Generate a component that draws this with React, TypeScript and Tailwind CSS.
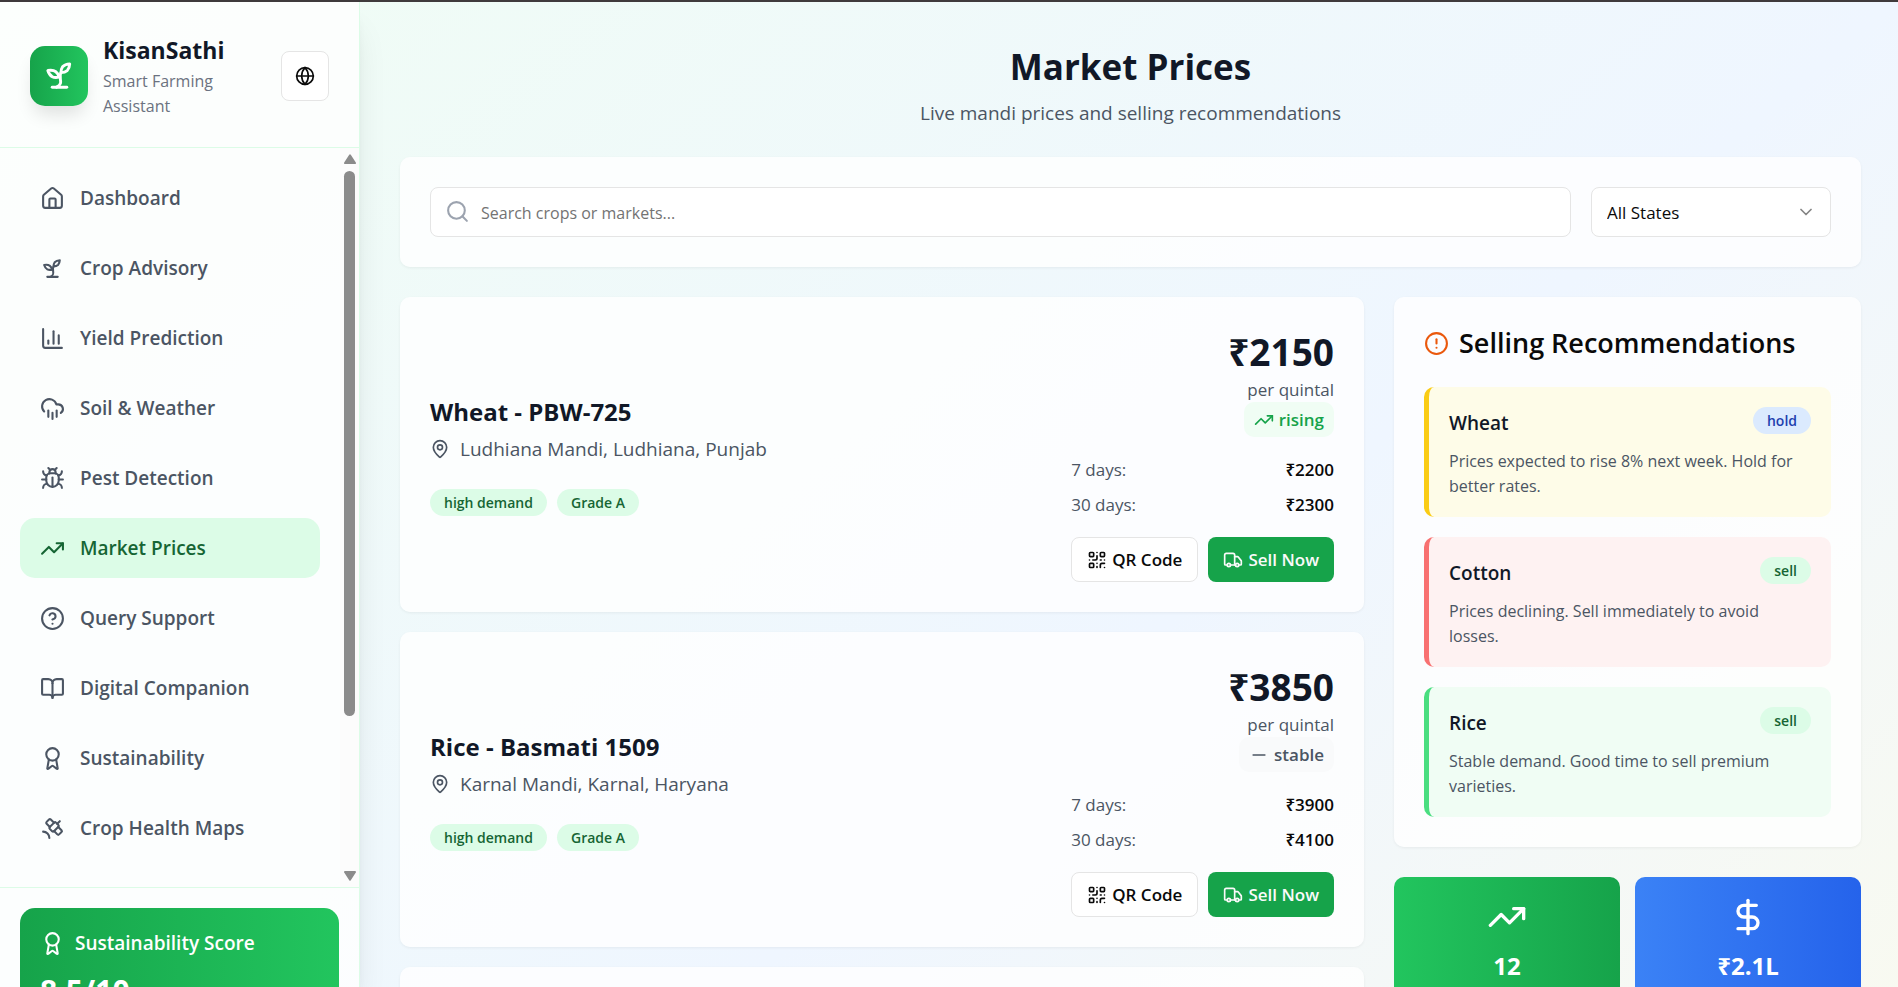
import type { ReactNode } from "react";
import {
  Award,
  BookOpen,
  Bug,
  ChartColumn,
  ChevronDown,
  CircleAlert,
  CircleQuestionMark,
  CloudRain,
  DollarSign,
  Globe,
  House,
  MapPin,
  Minus,
  QrCode,
  Satellite,
  Search,
  TrendingUp,
  Truck,
} from "lucide-react";

function Sprout({ className }: { className?: string }) {
  return (
    <svg
      viewBox="0 0 24 24"
      fill="none"
      stroke="currentColor"
      strokeWidth="2"
      strokeLinecap="round"
      strokeLinejoin="round"
      className={className}
      aria-hidden="true"
    >
      <path d="M7 20h10" />
      <path d="M10 20c5.5-2.5.8-6.4 3-10" />
      <path d="M9.5 9.4c1.1.8 1.8 2.2 2.3 3.7-2 .4-3.5.4-4.8-.3-1.2-.6-2.3-1.9-3-4.2 2.8-.5 4.4 0 5.5.8z" />
      <path d="M14.1 6a7 7 0 0 0-1.1 4c1.9-.1 3.3-.6 4.3-1.4 1-1 1.6-2.3 1.7-4.6-2.7.1-4 1-4.9 2z" />
    </svg>
  );
}

const navItems = [
  { label: "Dashboard", Icon: House },
  { label: "Crop Advisory", Icon: Sprout },
  { label: "Yield Prediction", Icon: ChartColumn },
  { label: "Soil & Weather", Icon: CloudRain },
  { label: "Pest Detection", Icon: Bug },
  { label: "Market Prices", Icon: TrendingUp, active: true },
  { label: "Query Support", Icon: CircleQuestionMark },
  { label: "Digital Companion", Icon: BookOpen },
  { label: "Sustainability", Icon: Award },
  { label: "Crop Health Maps", Icon: Satellite },
];

const prices = [
  {
    name: "Wheat - PBW-725",
    place: "Ludhiana Mandi, Ludhiana, Punjab",
    price: "₹2150",
    trend: "rising",
    week: "₹2200",
    month: "₹2300",
  },
  {
    name: "Rice - Basmati 1509",
    place: "Karnal Mandi, Karnal, Haryana",
    price: "₹3850",
    trend: "stable",
    week: "₹3900",
    month: "₹4100",
  },
];

const recommendations = [
  {
    crop: "Wheat",
    action: "hold",
    text: "Prices expected to rise 8% next week. Hold for better rates.",
    box: "border-[#facc15] bg-[#fefce8]",
    pill: "bg-[#dbeafe] text-[#1e40af]",
  },
  {
    crop: "Cotton",
    action: "sell",
    text: "Prices declining. Sell immediately to avoid losses.",
    box: "border-[#f87171] bg-[#fef2f2]",
    pill: "bg-[#dcfce7] text-[#166534]",
  },
  {
    crop: "Rice",
    action: "sell",
    text: "Stable demand. Good time to sell premium varieties.",
    box: "border-[#4ade80] bg-[#f0fdf4]",
    pill: "bg-[#dcfce7] text-[#166534]",
  },
];

function Pill({ tone, children }: { tone: string; children: ReactNode }) {
  return (
    <span className={`flex h-[27px] items-center rounded-full px-3.5 text-[14px] font-semibold ${tone}`}>
      {children}
    </span>
  );
}

function Card({ className = "", children }: { className?: string; children?: ReactNode }) {
  return (
    <section className={`rounded-[10px] bg-white/80 p-[30px] shadow-[0_1px_3px_rgba(0,0,0,0.06)] ${className}`}>
      {children}
    </section>
  );
}

function Sidebar() {
  return (
    <aside className="z-10 flex h-full w-[360px] shrink-0 flex-col border-r border-[#dcfce7] bg-white/80 shadow-[0_25px_31px_-6px_rgba(0,0,0,0.1),0_10px_12px_-7px_rgba(0,0,0,0.1)]">
      <div className="flex items-center justify-between border-b border-[#dcfce7] px-[30px] pt-[30px] pb-7">
        <div className="flex items-center gap-[15px]">
          <div className="flex h-[60px] w-[58px] shrink-0 items-center justify-center rounded-[15px] bg-[linear-gradient(to_right,#16a34a,#22c55e)] text-white shadow-[0_12px_18px_-4px_rgba(0,0,0,0.12)]">
            <Sprout className="size-[35px]" />
          </div>
          <div className="w-[140px]">
            <div className="text-[23px] leading-[37px] font-bold text-[#111827]">KisanSathi</div>
            <p className="text-[16px] leading-[25px] text-[#6b7280]">Smart Farming Assistant</p>
          </div>
        </div>
        <button
          type="button"
          aria-label="Change language"
          className="flex h-[50px] w-12 shrink-0 items-center justify-center rounded-lg border border-[#e5e5e5] bg-white text-[#0a0a0a]"
        >
          <Globe className="size-5" />
        </button>
      </div>

      <div className="flex min-h-0 flex-1">
        <nav className="flex min-w-0 flex-1 flex-col gap-2.5 overflow-y-auto p-5 [scrollbar-width:none]">
          {navItems.map(({ label, Icon, active }) => (
            <a
              key={label}
              href="#"
              className={`flex h-[60px] shrink-0 items-center gap-[15px] rounded-[15px] px-5 text-[19px] font-semibold ${
                active ? "bg-[#dcfce7] text-[#166534]" : "text-[#4b5563]"
              }`}
            >
              <Icon className="size-[25px] shrink-0" />
              {label}
            </a>
          ))}
        </nav>
        <div aria-hidden="true" className="flex w-[19px] shrink-0 flex-col items-center bg-[#fcfcfc] py-1.5">
          <svg viewBox="0 0 12 10" className="h-2.5 w-3 shrink-0 fill-[#8b8b8b]">
            <path d="M5.2.8a1 1 0 0 1 1.6 0l5 7.6a1 1 0 0 1-.8 1.6H1a1 1 0 0 1-.8-1.6z" />
          </svg>
          <div className="mt-[7px] h-[75%] w-[11px] rounded-full bg-[#8b8b8b]" />
          <svg viewBox="0 0 12 10" className="mt-auto h-2.5 w-3 shrink-0 fill-[#8b8b8b]">
            <path d="M5.2 9.2a1 1 0 0 0 1.6 0l5-7.6A1 1 0 0 0 11 0H1a1 1 0 0 0-.8 1.6z" />
          </svg>
        </div>
      </div>

      <div className="h-[100px] shrink-0 overflow-hidden border-t border-[#dcfce7] p-5">
        <div className="rounded-[15px] bg-[linear-gradient(to_right,#16a34a,#22c55e)] p-5 text-white">
          <div className="mb-2.5 flex items-center gap-2.5 text-[19px] leading-[30px] font-semibold">
            <Award className="size-[25px]" />
            Sustainability Score
          </div>
          <div className="text-[30px] leading-[45px] font-bold">8.5/10</div>
        </div>
      </div>
    </aside>
  );
}

function PriceCard({ item }: { item: (typeof prices)[number] }) {
  const rising = item.trend === "rising";
  return (
    <Card className="flex items-center justify-between">
      <div>
        <h3 className="text-[24px] leading-[38px] font-bold text-[#111827]">{item.name}</h3>
        <p className="mt-0.5 flex items-center gap-2.5 text-[19px] leading-[32px] text-[#4b5563]">
          <MapPin className="size-5" />
          {item.place}
        </p>
        <div className="mt-6 flex gap-2.5">
          <Pill tone="bg-[#dcfce7] text-[#166534]">high demand</Pill>
          <Pill tone="bg-[#dcfce7] text-[#166534]">Grade A</Pill>
        </div>
      </div>

      <div className="flex flex-col">
        <div className="text-right text-[37px] leading-[50px] font-bold text-[#111827]">{item.price}</div>
        <div className="text-right text-[17px] leading-[25px] text-[#4b5563]">per quintal</div>
        <div
          className={`flex items-center gap-[5px] self-end rounded-[10px] px-2.5 py-[5px] text-[17px] leading-[25px] font-semibold ${
            rising ? "bg-[#f0fdf4] text-[#16a34a]" : "bg-[#f9fafb] text-[#4b5563]"
          }`}
        >
          {rising ? <TrendingUp className="size-5" /> : <Minus className="size-5" />}
          {item.trend}
        </div>
        <dl className="mt-5 flex flex-col gap-2.5 text-[17px] leading-[25px]">
          <div className="flex justify-between">
            <dt className="text-[#4b5563]">7 days:</dt>
            <dd className="font-semibold text-[#0a0a0a]">{item.week}</dd>
          </div>
          <div className="flex justify-between">
            <dt className="text-[#4b5563]">30 days:</dt>
            <dd className="font-semibold text-[#0a0a0a]">{item.month}</dd>
          </div>
        </dl>
        <div className="mt-5 flex gap-2.5 text-[17px] font-semibold">
          <button
            type="button"
            className="flex h-[45px] items-center gap-[5px] rounded-lg border border-[#e5e5e5] bg-white px-[15px] text-[#0a0a0a]"
          >
            <QrCode className="size-5" />
            QR Code
          </button>
          <button
            type="button"
            className="flex h-[45px] items-center gap-[5px] rounded-lg bg-[#16a34a] px-[15px] text-[#fafafa]"
          >
            <Truck className="size-5" />
            Sell Now
          </button>
        </div>
      </div>
    </Card>
  );
}

export default function App() {
  return (
    <div className="flex h-screen flex-col overflow-hidden border-t-2 border-[#3f3a3c] bg-[linear-gradient(to_bottom_right,#f0fdf4,#eff6ff,#fefce8)] bg-[length:100%_1613px] font-['Open_Sans','Noto_Sans',sans-serif]">
      <div className="flex min-h-0 flex-1">
        <Sidebar />
        <main className="min-w-0 flex-1 overflow-hidden pt-10 pr-[37px] pl-10">
          <header className="mb-7 text-center">
            <h1 className="text-[35px] leading-[50px] font-bold text-[#111827]">Market Prices</h1>
            <p className="mt-[5px] text-[19px] leading-[32px] text-[#4b5563]">
              Live mandi prices and selling recommendations
            </p>
          </header>

          <Card className="mb-[30px] flex gap-5">
            <div className="relative flex-1">
              <Search className="absolute top-3 left-[15px] size-[25px] text-[#9ca3af]" />
              <input
                type="text"
                aria-label="Search crops or markets"
                placeholder="Search crops or markets..."
                className="h-[50px] w-full rounded-lg border border-[#e5e5e5] bg-white pt-0.5 pr-4 pl-[50px] text-[16px] text-[#0a0a0a] placeholder:text-[#737373]"
              />
            </div>
            <div className="relative w-60">
              <select
                aria-label="State"
                className="h-[50px] w-full appearance-none rounded-lg border border-[#e5e5e5] bg-white px-[15px] pt-0.5 text-[17px] text-[#0a0a0a]"
              >
                <option>All States</option>
              </select>
              <ChevronDown className="pointer-events-none absolute top-[15px] right-[15px] size-5 text-[#0a0a0a] opacity-50" />
            </div>
          </Card>

          <div className="grid grid-cols-3 items-start gap-[30px]">
            <div className="col-span-2 flex flex-col gap-5">
              {prices.map((item) => (
                <PriceCard key={item.name} item={item} />
              ))}
              <Card className="h-[315px]" />
            </div>

            <div className="flex flex-col gap-[30px]">
              <Card>
                <h2 className="mb-7 flex items-center gap-2.5 text-[27px] leading-[32px] font-semibold text-[#0a0a0a]">
                  <CircleAlert className="size-[25px] shrink-0 text-[#ea580c]" />
                  Selling Recommendations
                </h2>
                <div className="flex flex-col gap-5">
                  {recommendations.map((rec) => (
                    <article key={rec.crop} className={`rounded-[10px] border-l-[5px] p-5 ${rec.box}`}>
                      <div className="mb-2.5 flex items-start justify-between">
                        <h4 className="text-[19px] leading-[32px] font-semibold text-[#111827]">{rec.crop}</h4>
                        <Pill tone={rec.pill}>{rec.action}</Pill>
                      </div>
                      <p className="-mb-0.5 text-[16px] leading-[25px] text-[#4b5563]">{rec.text}</p>
                    </article>
                  ))}
                </div>
              </Card>

              <div className="grid grid-cols-2 gap-[15px] text-center text-[24px] leading-[37px] font-bold text-white">
                <div className="flex flex-col items-center gap-2.5 rounded-[10px] bg-[linear-gradient(to_right,#22c55e,#16a34a)] p-5 pb-10">
                  <TrendingUp className="size-10" />
                  12
                </div>
                <div className="flex flex-col items-center gap-2.5 rounded-[10px] bg-[linear-gradient(to_right,#3b82f6,#2563eb)] p-5 pb-10">
                  <DollarSign className="size-10" />
                  ₹2.1L
                </div>
              </div>
            </div>
          </div>
        </main>
      </div>
    </div>
  );
}
